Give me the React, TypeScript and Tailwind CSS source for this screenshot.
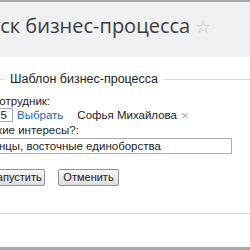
export default function App() {
  return (
    <div className="flex h-[250px] w-[250px] flex-col overflow-hidden bg-white font-['Liberation_Sans',Arial,sans-serif] text-[#222]">
      <div className="h-[2px] shrink-0 bg-[#a9a9a9]" />
      <div className="flex h-[55px] shrink-0 items-start bg-[#eef0f2] pt-[10px]">
        <h1 className="-ml-[45px] flex items-center gap-[5px] whitespace-nowrap font-['Open_Sans',sans-serif] text-[20px] font-normal leading-[28px] text-[#3c3c3c]">
          Запуск бизнес-процесса
          <span className="text-[18px] leading-none text-[#c4c7cb]">☆</span>
        </h1>
      </div>
      <div className="flex-1">
        <fieldset className="-ml-[30px] mt-[15px] w-[320px] border border-[#d6d6d6] pb-[27px] pl-[20px]">
          <legend className="ml-[13px] px-[6px] text-[12.5px] leading-[15px] text-[#222]">
            Шаблон бизнес-процесса
          </legend>
          <div className="pt-[7px] text-[11.5px] leading-[14px]">
            <div>Сотрудник:</div>
            <div className="flex items-center whitespace-nowrap">
              <input
                readOnly
                value="15"
                className="h-[14px] w-[22px] border border-[#a5acb2] px-[2px] text-[11.5px] leading-[12px] outline-none"
              />
              <a className="ml-[4px] text-[#2067b0]">Выбрать</a>
              <span className="ml-[14px]">Софья Михайлова</span>
              <span className="ml-[4px] text-[13px] leading-none text-[#a8a8a8]">×</span>
            </div>
            <div className="-ml-[7px] mt-[1px]">Какие интересы?:</div>
            <input
              readOnly
              value="Танцы, восточные единоборства"
              className="-ml-[8px] mt-[1px] h-[16px] w-[249px] border border-[#a5acb2] px-[2px] text-[11.5px] leading-[14px] outline-none"
            />
            <div className="-ml-[4px] mt-[15px] flex gap-[13px]">
              <button className="h-[17px] w-[58px] rounded-[2px] border border-[#8f8f8f] bg-gradient-to-b from-[#f7f7f7] to-[#dedede] text-[11px] leading-[15px] text-[#222]">
                Запустить
              </button>
              <button className="h-[17px] w-[61px] rounded-[2px] border border-[#8f8f8f] bg-gradient-to-b from-[#f7f7f7] to-[#dedede] text-[11px] leading-[15px] text-[#222]">
                Отменить
              </button>
            </div>
          </div>
        </fieldset>
      </div>
      <div className="h-[3px] shrink-0 bg-[#a9a9a9]" />
    </div>
  );
}
